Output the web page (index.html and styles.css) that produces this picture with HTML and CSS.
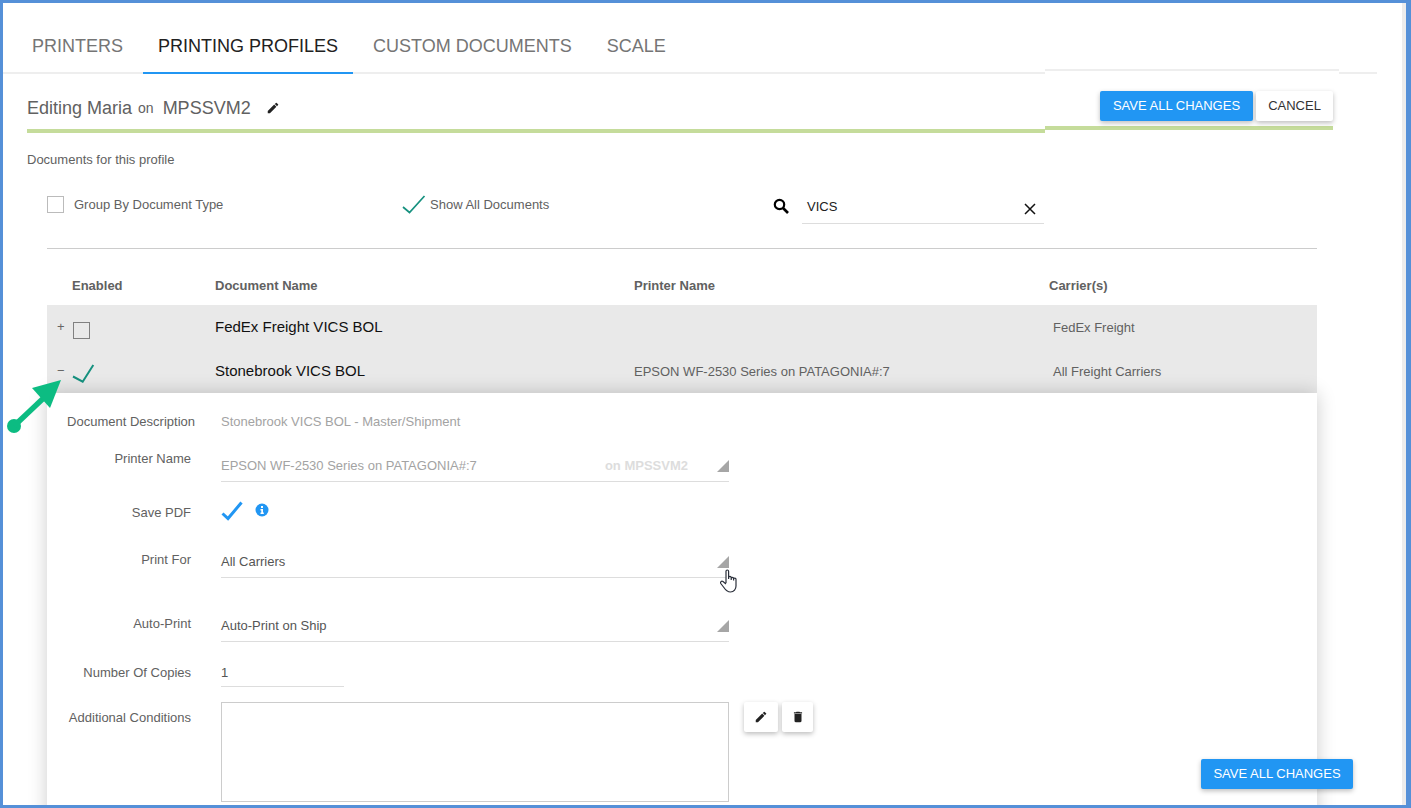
FILE: index.html
```html
<!DOCTYPE html>
<html lang="en">
<head>
	<meta charset="UTF-8">
	<title>Printing Profiles</title>
	<link rel="stylesheet" href="styles.css">
</head>
<body>
	<div class="frame">
		<div class="main">
			<div class="tabs">
				<a class="tab">PRINTERS</a>
				<a class="tab active">PRINTING PROFILES</a>
				<a class="tab">CUSTOM DOCUMENTS</a>
				<a class="tab">SCALE</a>
			</div>

			<div class="title">
				<span>Editing Maria</span>
				<span class="title_on">on</span>
				<span class="title_server">MPSSVM2</span>
				<svg class="title_pencil" width="14" height="14" viewBox="0 0 24 24"><path d="M3 17.25V21h3.75L17.81 9.94l-3.75-3.75L3 17.25zM20.71 7.04a1 1 0 0 0 0-1.41l-2.34-2.34a1 1 0 0 0-1.41 0l-1.83 1.83 3.75 3.75 1.83-1.83z"/></svg>
			</div>

			<div class="docs_label">Documents for this profile</div>

			<div class="options">
				<div class="opt opt_group">
					<span class="box"></span>
					<span>Group By Document Type</span>
				</div>
				<div class="opt opt_show">
					<svg width="24" height="19" viewBox="0 0 24 19"><path d="M1 12l6.500 5.500L22.500 1" fill="none" stroke="#16917f" stroke-width="1.700"/></svg>
					<span>Show All Documents</span>
				</div>
				<svg class="search_icon" width="16" height="16" viewBox="0 0 16 16"><circle cx="6.500" cy="6.500" r="4.700" fill="none" stroke="#000" stroke-width="2.200"/><path d="M10 10l5 5" stroke="#000" stroke-width="2.600"/></svg>
				<div class="search">
					<span>VICS</span>
					<svg class="search_clear" width="12" height="12" viewBox="0 0 12 12"><path d="M1 1l10 10M11 1L1 11" stroke="#111" stroke-width="1.500"/></svg>
				</div>
			</div>

			<div class="rule"></div>

			<div class="grid grid_head">
				<span></span>
				<span>Enabled</span>
				<span>Document Name</span>
				<span>Printer Name</span>
				<span>Carrier(s)</span>
			</div>
			<div class="grid row">
				<span class="toggle">+</span>
				<span class="box box_dark"></span>
				<span class="doc_name">FedEx Freight VICS BOL</span>
				<span class="cell"></span>
				<span class="cell carrier">FedEx Freight</span>
			</div>
			<div class="grid row">
				<span class="toggle">&minus;</span>
				<svg class="row_check" width="24" height="19" viewBox="0 0 24 19"><path d="M1 12.500l9.700 5.200L21.300 1" fill="none" stroke="#16917f" stroke-width="2"/></svg>
				<span class="doc_name">Stonebrook VICS BOL</span>
				<span class="cell">EPSON WF-2530 Series on PATAGONIA#:7</span>
				<span class="cell carrier">All Freight Carriers</span>
			</div>

			<div class="panel">
				<div class="frow frow_desc">
					<label class="flabel flabel_desc">Document Description</label>
					<div class="fvalue muted">Stonebrook VICS BOL - Master/Shipment</div>
				</div>
				<div class="frow frow_printer">
					<label class="flabel">Printer Name</label>
					<div class="select select_printer muted">
						<span>EPSON WF-2530 Series on PATAGONIA#:7</span>
						<span class="select_server">on MPSSVM2</span>
						<i class="tri"></i>
					</div>
				</div>
				<div class="frow frow_pdf">
					<label class="flabel">Save PDF</label>
					<div class="pdf">
						<svg width="24" height="20" viewBox="0 0 24 20"><path d="M1.500 12.500l5.500 5L20.500 1.500" fill="none" stroke="#2196f3" stroke-width="3"/></svg>
						<svg class="pdf_info" width="14" height="14" viewBox="0 0 14 14"><circle cx="7" cy="7" r="6.500" fill="#2196f3"/><path d="M6 3h2v2H6zM5.500 6H8v3.500h.8V11H5.500V9.500h.8V7.500h-.8z" fill="#fff"/></svg>
					</div>
				</div>
				<div class="frow frow_for">
					<label class="flabel">Print For</label>
					<div class="select select_plain">
						<span>All Carriers</span>
						<i class="tri"></i>
					</div>
				</div>
				<div class="frow frow_auto">
					<label class="flabel">Auto-Print</label>
					<div class="select select_plain">
						<span>Auto-Print on Ship</span>
						<i class="tri"></i>
					</div>
				</div>
				<div class="frow frow_copies">
					<label class="flabel">Number Of Copies</label>
					<div class="copies">1</div>
				</div>
				<div class="frow frow_cond">
					<label class="flabel flabel_cond">Additional Conditions</label>
					<div class="cond">
						<div class="cond_box"></div>
						<button class="icon_btn icon_edit"><svg width="14" height="14" viewBox="0 0 24 24"><path d="M3 17.250V21h3.750L17.810 9.940l-3.750-3.750L3 17.250zM20.710 7.040a1 1 0 0 0 0-1.410l-2.340-2.340a1 1 0 0 0-1.410 0l-1.830 1.830 3.750 3.750 1.830-1.830z"/></svg></button>
						<button class="icon_btn icon_del"><svg width="14" height="14" viewBox="0 0 24 24"><path d="M6 19c0 1.100.9 2 2 2h8c1.100 0 2-.9 2-2V7H6v12zM19 4h-3.500l-1-1h-5l-1 1H5v2h14V4z"/></svg></button>
					</div>
				</div>
			</div>
		</div>
		<div class="strip"></div>

		<!-- floating things on top of the page -->
		<div class="action_bar">
			<div class="action_btns">
				<button class="btn btn_blue">SAVE ALL CHANGES</button>
				<button class="btn btn_white">CANCEL</button>
			</div>
		</div>
		<button class="btn btn_blue btn_float">SAVE ALL CHANGES</button>
		<svg class="arrow" width="60" height="56" viewBox="0 0 60 56"><circle cx="8" cy="49" r="7" fill="#0cbc82"/><path d="M8 49L44 15" stroke="#0cbc82" stroke-width="5.500"/><path d="M55 3L26 11 44 31z" fill="#0cbc82"/></svg>
		<svg class="hand" width="19" height="25" viewBox="0 0 19 25"><path d="M6 14V2.200C6 .6 8.600 .6 8.600 2.200V10M8.600 8.500c0-1.400 2.600-1.400 2.600 0V11M11.200 9.500c0-1.400 2.400-1.400 2.400 0V11.500M13.600 10c0-1.200 2.400-1.200 2.400.2V17c0 3-2 6-5.500 6C7 23 5.500 21 3.500 18L.8 14.500C0 13 1.500 11.500 3 12.500L6 15" fill="#fff" stroke="#2a2f3a" stroke-width="1.200"/></svg>
	</div>
</body>
</html>
```

FILE: styles.css
```css
*{
	margin: 0;
	padding: 0;
	box-sizing: border-box;
}
html,body{
	height: 100%;
	overflow: hidden;
}
body{
	font-family: "Liberation Sans", Arial, sans-serif;
	font-size: 13px;
	line-height: 18px;
	color: #616161;
	background: #fff;
}
.frame{
	position: relative;
	display: flex;
	width: 1411px;
	height: 808px;
	border-style: solid;
	border-color: #5590d8;
	border-width: 3px 5px 3px 3px;
	overflow: hidden;
}
.main{
	flex: 1;
	min-width: 0;
}
.strip{
	width: 4px;
	background: #ececec;
}

/* tabs */
.tabs{
	display: flex;
	gap: 5px;
	width: 1374px;
	height: 71px;
	padding-left: 14px;
	border-bottom: 2px solid #eee;
}
.tab{
	height: 71px;
	padding: 27px 15px 0;
	font-size: 18px;
	line-height: 32px;
	color: #757575;
}
.tab.active{
	color: #212121;
	border-bottom: 2px solid #2196f3;
}

/* title */
.title{
	display: flex;
	align-items: center;
	width: 1018px;
	height: 59px;
	margin-left: 24px;
	padding-top: 13px;
	border-bottom: 4px solid #c5dc9b;
	font-size: 18px;
	color: #616161;
}
.title_on{
	margin-left: 6px;
	font-size: 14px;
}
.title_server{
	margin-left: 9px;
}
.title_pencil{
	margin-left: 15px;
	fill: #222;
}
.docs_label{
	margin: 18px 0 0 24px;
}

/* options */
.options{
	display: flex;
	height: 28px;
	margin: 27px 0 0 44px;
}
.opt{
	display: flex;
	align-items: flex-start;
	height: 17px;
}
.opt_group{
	width: 355px;
	gap: 10px;
}
.opt_show{
	width: 371px;
	gap: 4px;
}
.opt_show svg{
	margin-top: -1px;
}
.box{
	display: block;
	width: 17px;
	height: 17px;
	border: 1px solid #bbb;
}
.search_icon{
	margin: 2px 13px 0 0;
}
.search{
	position: relative;
	width: 242px;
	height: 28px;
	padding: 2px 0 0 5px;
	border-bottom: 1px solid #ddd;
	color: #212121;
}
.search_clear{
	position: absolute;
	right: 8px;
	top: 7px;
}
.rule{
	width: 1270px;
	height: 1px;
	margin: 24px 0 0 44px;
	background: #ccc;
}

/* table */
.grid{
	display: grid;
	grid-template-columns: 25px 143px 419px 415px 1fr;
	width: 1270px;
	margin-left: 44px;
}
.grid_head{
	height: 56px;
	padding-top: 28px;
	font-weight: 700;
	color: #616161;
}
.row{
	height: 44px;
	align-items: center;
	background: #e9e9e9;
}
.toggle{
	padding-left: 10px;
	color: #666;
}
.box_dark{
	margin: 7px 0 0 1px;
	border-color: #808080;
}
.row_check{
	display: block;
	margin-top: 5px;
}
.doc_name{
	font-size: 15px;
	color: #111;
	margin-top: -1px;
}
.cell{
	color: #616161;
	margin-top: 1px;
}
.carrier{
	padding-left: 4px;
}

/* expanded document */
.panel{
	position: relative;
	width: 1270px;
	height: 430px;
	margin-left: 44px;
	padding-top: 16px;
	background: #fff;
	box-shadow: 0 0 18px rgba(0,0,0,.2);
}
.frow{
	display: grid;
	grid-template-columns: 144px 1fr;
	column-gap: 30px;
	align-items: start;
}
.flabel{
	padding-top: 1px;
	text-align: right;
	white-space: nowrap;
}
.flabel_desc{
	line-height: 24px;
	margin-right: -4px;
}
.fvalue{
	padding-top: 1px;
	line-height: 24px;
}
.muted{
	color: #a3a3a3;
}
.select{
	display: flex;
	align-items: flex-start;
	width: 508px;
	border-bottom: 1px solid #ddd;
}
.select_printer{
	height: 33px;
	padding-top: 8px;
}
.select_server{
	margin-left: auto;
	margin-right: 29px;
	font-weight: 700;
	color: #ddd;
}
.select_printer .tri{
	margin-top: 3px;
}
.select_plain{
	height: 28px;
	padding-top: 3px;
	justify-content: space-between;
	color: #555;
}
.tri{
	display: block;
	width: 12px;
	height: 12px;
	margin-top: 3px;
	background: #a6a6a6;
	clip-path: polygon(100% 0, 100% 100%, 0 100%);
}
.frow_printer{
	margin-top: 15px;
}
.frow_pdf{
	margin-top: 21px;
}
.pdf{
	display: flex;
	height: 18px;
}
.pdf svg{
	display: block;
	margin-top: -2px;
}
.pdf .pdf_info{
	margin: 0 0 0 10px;
}
.frow_for{
	margin-top: 28px;
}
.frow_auto{
	margin-top: 36px;
}
.frow_copies{
	margin-top: 21px;
}
.copies{
	width: 123px;
	height: 24px;
	padding-top: 1px;
	border-bottom: 1px solid #ddd;
	color: #555;
}
.frow_cond{
	margin-top: 15px;
}
.flabel_cond{
	padding-top: 7px;
}
.cond{
	display: flex;
	align-items: flex-start;
}
.cond_box{
	width: 508px;
	height: 100px;
	border: 1px solid #ccc;
}
.icon_btn{
	display: flex;
	align-items: center;
	justify-content: center;
	height: 30px;
	border: 0;
	border-radius: 2px;
	background: #fff;
	box-shadow: 0 2px 5px rgba(0,0,0,.26);
}
.icon_btn svg{
	fill: #222;
}
.icon_edit{
	width: 34px;
	margin-left: 15px;
}
.icon_del{
	width: 31px;
	margin-left: 4px;
}

/* buttons */
.btn{
	height: 30px;
	padding-bottom: 2px;
	border: 0;
	border-radius: 2px;
	font-family: inherit;
	font-size: 13px;
	box-shadow: 0 2px 5px rgba(0,0,0,.26);
}
.btn_blue{
	width: 153px;
	background: #2196f3;
	color: #fff;
}
.btn_white{
	width: 77px;
	background: #fff;
	color: #333;
}
.action_bar{
	position: absolute;
	left: 1042px;
	top: 66px;
	width: 294px;
	height: 64px;
	background: #fff;
	border-top: 2px solid #eee;
}
.action_btns{
	display: flex;
	justify-content: flex-end;
	gap: 3px;
	width: 288px;
	height: 59px;
	padding-top: 20px;
	border-bottom: 4px solid #c5dc9b;
}
.btn_float{
	position: absolute;
	left: 1198px;
	top: 756px;
	width: 152px;
}
.arrow{
	position: absolute;
	left: 3px;
	top: 374px;
}
.hand{
	position: absolute;
	left: 717px;
	top: 566px;
}
```
